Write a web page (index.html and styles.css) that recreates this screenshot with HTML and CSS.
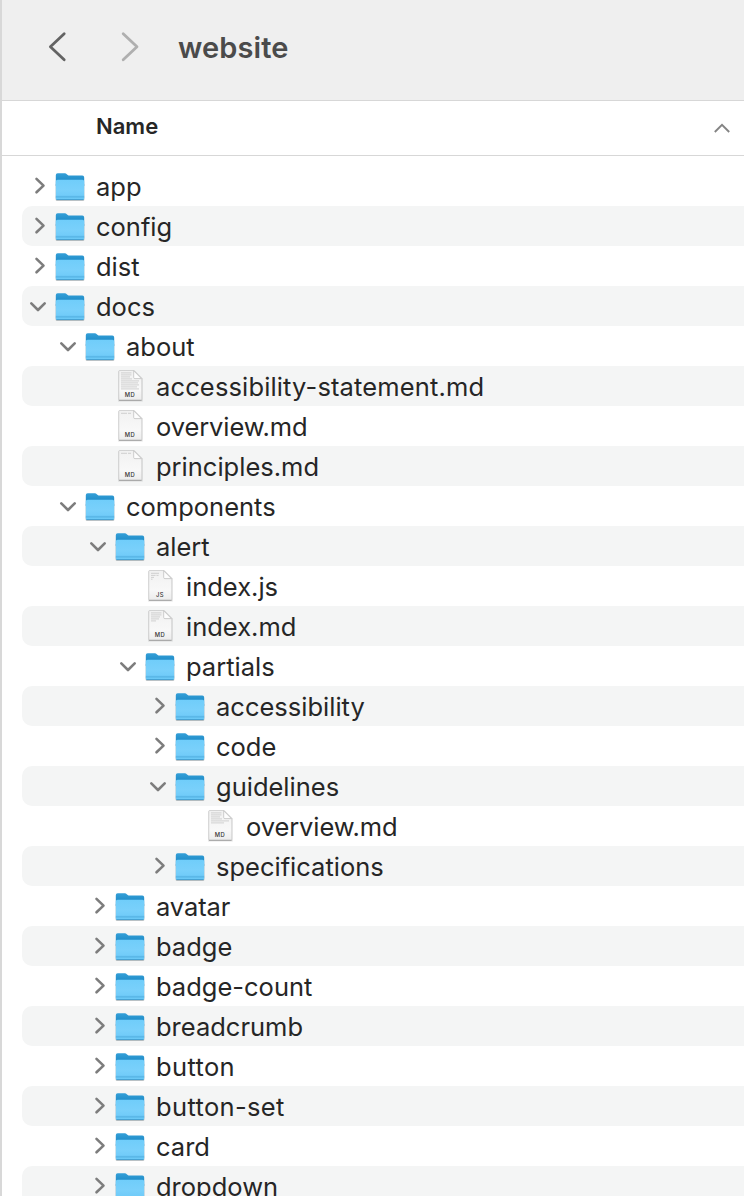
FILE: index.html
```html
<!DOCTYPE html>
<html lang="en">
<head>
<meta charset="utf-8">
<title>website</title>
<link rel="stylesheet" href="styles.css">
</head>
<body>
<svg class="defs" width="0" height="0" aria-hidden="true">
  <defs>
    <linearGradient id="front" x1="0" y1="0" x2="0" y2="1"><stop offset="0" stop-color="#70cdfa"/><stop offset=".5" stop-color="#79d0fb"/><stop offset="1" stop-color="#6ac8f7"/></linearGradient>
    <linearGradient id="back" x1="0" y1="0" x2="0" y2="1"><stop offset="0" stop-color="#349fd8"/><stop offset="1" stop-color="#1380bd"/></linearGradient>
    <linearGradient id="paper" x1="0" y1="0" x2="0" y2="1"><stop offset="0" stop-color="#f1f1f1"/><stop offset="0.65" stop-color="#f8f8f8"/><stop offset="1" stop-color="#ececec"/></linearGradient>
    <symbol id="right" viewBox="0 0 24 40"><path d="M8.5 12.9l7 6.7-7 6.7"/></symbol>
    <symbol id="down" viewBox="0 0 24 40"><path d="M3.3 17.4l6.7 6.6 6.7-6.6"/></symbol>
    <symbol id="folder" viewBox="0 0 30 40">
      <rect x=".6" y="17" width="28.8" height="18" rx="1.6" fill="#000" opacity=".22"/>
      <path d="M.8 9.2Q.8 7.3 2.7 7.3H10q.9 0 1.5.6l1.2 1.1q.7.6 1.7.6h12.9q1.9 0 1.9 1.8V20H.8z" fill="url(#back)"/>
      <path d="M.8 15.5q0-1.7 1.7-1.7h25q1.7 0 1.7 1.7v17q0 1.5-1.5 1.5H2.3q-1.5 0-1.5-1.5z" fill="url(#front)"/>
      <path d="M.8 30.4h28.4" stroke="#4faee0" stroke-width=".7"/>
      <path d="M.8 31.6h28.4" stroke="#5bb9e9" stroke-width=".8"/>
      <path d="M1.4 33.6h27.2" stroke="#3f98c9" stroke-width=".9"/>
    </symbol>
    <symbol id="page" viewBox="0 0 30 40">
      <path d="M4.4 4.2H19.5L27.8 12.6V35.4H3V5.5z" fill="#000" opacity=".1"/>
      <path d="M3.8 5.4Q3.8 4.5 4.7 4.5H19L26.8 12.4V33.1q0 1-1 1H4.8q-1 0-1-1z" fill="url(#paper)" stroke="#c8c8c8" stroke-width=".7"/>
      <path d="M4 34.4h22.6" stroke="#a0a0a0" stroke-width=".9"/>
      <path d="M18.7 4.8v6.7q0 1.1 1.1 1.1h6.6z" fill="#fdfdfd" stroke="#c0c0c0" stroke-width=".8"/>
    </symbol>
    <path id="head" d="M6 7.3h6M13 7.3h3"/>
    <path id="short" d="M6 7.3h8M6 9.4h4.5M11.5 9.4h2M6 11.4h3M6 13.2h1.5"/>
    <path id="half" d="M6 6.9h10.5M6 8.9h10.5M6 10.9h9M6 12.9h8M6 14.9h5"/>
    <path id="medium" d="M6 6.9h10.5M6 8.9h10.5M6 10.9h9M6 12.9h11M6 14.9h18M6 16.9h13"/>
    <path id="full" d="M6 6.9h10.5M6 8.9h10.5M6 10.9h9M6 12.9h11M6 14.9h18M6 16.9h17M6 18.9h18M6 20.9h16M6 22.9h18"/>
  </defs>
</svg>
<div class="window">
  <header class="toolbar">
    <svg class="nav" width="100" height="40" viewBox="0 0 100 40"><path d="M16.2 6.8L2.4 19.8l13.8 13"/><path class="disabled" d="M75.2 6.8l13.8 13-13.8 13"/></svg>
    <h1 class="title">website</h1>
  </header>
  <div class="columns">
    <span class="column-name">Name</span>
    <svg class="sort" width="18" height="12" viewBox="0 0 18 12"><path d="M1.8 10L9 2.8l7.2 7.2"/></svg>
  </div>
  <main class="tree">
    <div class="row"><svg class="chevron"><use href="#right"/></svg><svg class="icon"><use href="#folder"/></svg><span class="label">app</span></div>
    <div class="row"><svg class="chevron"><use href="#right"/></svg><svg class="icon"><use href="#folder"/></svg><span class="label">config</span></div>
    <div class="row"><svg class="chevron"><use href="#right"/></svg><svg class="icon"><use href="#folder"/></svg><span class="label">dist</span></div>
    <div class="row"><svg class="chevron"><use href="#down"/></svg><svg class="icon"><use href="#folder"/></svg><span class="label">docs</span></div>
    <div class="row l1"><svg class="chevron"><use href="#down"/></svg><svg class="icon"><use href="#folder"/></svg><span class="label">about</span></div>
    <div class="row l2"><span class="chevron"></span><svg class="icon" viewBox="0 0 30 40"><use href="#page"/><use class="lines" href="#full"/><text x="15" y="31">MD</text></svg><span class="label wide">accessibility-statement.md</span></div>
    <div class="row l2"><span class="chevron"></span><svg class="icon" viewBox="0 0 30 40"><use href="#page"/><use class="lines" href="#head"/><text x="15" y="31">MD</text></svg><span class="label narrow">overview.md</span></div>
    <div class="row l2"><span class="chevron"></span><svg class="icon" viewBox="0 0 30 40"><use href="#page"/><use class="lines" href="#head"/><text x="15" y="31">MD</text></svg><span class="label">principles.md</span></div>
    <div class="row l1"><svg class="chevron"><use href="#down"/></svg><svg class="icon"><use href="#folder"/></svg><span class="label">components</span></div>
    <div class="row l2"><svg class="chevron"><use href="#down"/></svg><svg class="icon"><use href="#folder"/></svg><span class="label">alert</span></div>
    <div class="row l3"><span class="chevron"></span><svg class="icon" viewBox="0 0 30 40"><use href="#page"/><use class="lines" href="#short"/><text x="15" y="31">JS</text></svg><span class="label">index.js</span></div>
    <div class="row l3"><span class="chevron"></span><svg class="icon" viewBox="0 0 30 40"><use href="#page"/><use class="lines" href="#half"/><text x="15" y="31">MD</text></svg><span class="label">index.md</span></div>
    <div class="row l3"><svg class="chevron"><use href="#down"/></svg><svg class="icon"><use href="#folder"/></svg><span class="label">partials</span></div>
    <div class="row l4"><svg class="chevron"><use href="#right"/></svg><svg class="icon"><use href="#folder"/></svg><span class="label">accessibility</span></div>
    <div class="row l4"><svg class="chevron"><use href="#right"/></svg><svg class="icon"><use href="#folder"/></svg><span class="label">code</span></div>
    <div class="row l4"><svg class="chevron"><use href="#down"/></svg><svg class="icon"><use href="#folder"/></svg><span class="label">guidelines</span></div>
    <div class="row l5"><span class="chevron"></span><svg class="icon" viewBox="0 0 30 40"><use href="#page"/><use class="lines" href="#medium"/><text x="15" y="31">MD</text></svg><span class="label narrow">overview.md</span></div>
    <div class="row l4"><svg class="chevron"><use href="#right"/></svg><svg class="icon"><use href="#folder"/></svg><span class="label">specifications</span></div>
    <div class="row l2"><svg class="chevron"><use href="#right"/></svg><svg class="icon"><use href="#folder"/></svg><span class="label narrow">avatar</span></div>
    <div class="row l2"><svg class="chevron"><use href="#right"/></svg><svg class="icon"><use href="#folder"/></svg><span class="label">badge</span></div>
    <div class="row l2"><svg class="chevron"><use href="#right"/></svg><svg class="icon"><use href="#folder"/></svg><span class="label">badge-count</span></div>
    <div class="row l2"><svg class="chevron"><use href="#right"/></svg><svg class="icon"><use href="#folder"/></svg><span class="label">breadcrumb</span></div>
    <div class="row l2"><svg class="chevron"><use href="#right"/></svg><svg class="icon"><use href="#folder"/></svg><span class="label loose">button</span></div>
    <div class="row l2"><svg class="chevron"><use href="#right"/></svg><svg class="icon"><use href="#folder"/></svg><span class="label loose">button-set</span></div>
    <div class="row l2"><svg class="chevron"><use href="#right"/></svg><svg class="icon"><use href="#folder"/></svg><span class="label">card</span></div>
    <div class="row l2"><svg class="chevron"><use href="#right"/></svg><svg class="icon"><use href="#folder"/></svg><span class="label">dropdown</span></div>
  </main>
</div>
</body>
</html>
```
FILE: styles.css
```css
* { box-sizing: border-box; }
body { margin: 0; background: #fff; color: #262626; font-family: Inter, "Liberation Sans", sans-serif; }
.defs { display: block; }
.window { width: 744px; height: 1196px; overflow: hidden; border-left: 2px solid #d8d8d8; }
.toolbar { height: 101px; display: flex; align-items: flex-start; padding: 27px 0 0 46px; background: #efefef; border-bottom: 1px solid #d7d7d7; }
.nav { flex: none; fill: none; stroke: #636363; stroke-width: 2.8; stroke-linecap: round; stroke-linejoin: round; }
.nav .disabled { stroke: #afafaf; }
.title { margin: 0 0 0 30px; padding-top: 1px; font-size: 29px; line-height: 40px; font-weight: 600; letter-spacing: 0.1px; color: #4b4b4b; }
.columns { height: 55px; display: flex; justify-content: space-between; align-items: flex-start; padding: 10px 13px 0 94px; border-bottom: 1px solid #d7d7d7; }
.column-name { font-size: 22px; line-height: 30px; font-weight: 600; }
.sort { margin-top: 11px; fill: none; stroke: #848484; stroke-width: 1.9; }
.tree { padding: 10px 0 0 20px; }
.row { height: 40px; display: flex; align-items: center; padding-left: 6px; border-radius: 10px 0 0 10px; }
.row:nth-child(even) { background: #f4f5f5; }
.l1 { padding-left: 36px; }
.l2 { padding-left: 66px; }
.l3 { padding-left: 96px; }
.l4 { padding-left: 126px; }
.l5 { padding-left: 156px; }
.chevron { flex: none; width: 24px; height: 40px; margin-right: 3px; fill: none; stroke: #7d7d7d; stroke-width: 2.6; stroke-linecap: round; stroke-linejoin: round; }
.icon { flex: none; width: 30px; height: 40px; margin-right: 11px; }
.icon text { font-size: 5.8px; font-weight: 500; text-anchor: middle; letter-spacing: 0.4px; fill: #333; }
.lines { fill: none; stroke: #c6c6c6; stroke-width: 0.8; }
.label { padding-top: 2px; font-size: 25.5px; line-height: 38px; white-space: nowrap; }
.wide { letter-spacing: 0.14px; }
.loose { letter-spacing: 0.35px; }
.narrow { letter-spacing: -0.1px; }
```
